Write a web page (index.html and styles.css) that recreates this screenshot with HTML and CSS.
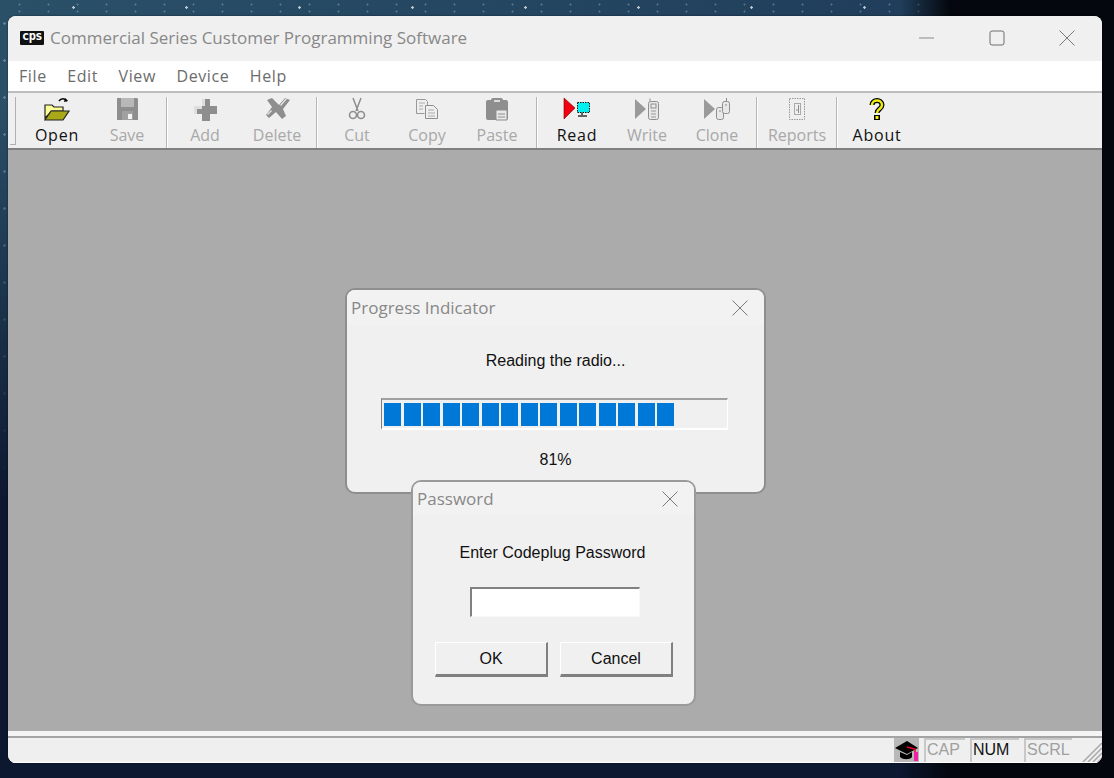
FILE: index.html
```html
<!DOCTYPE html>
<html lang="en">
<head>
  <meta charset="UTF-8">
  <title>Commercial Series Customer Programming Software</title>
  <link rel="stylesheet" href="styles.css">
</head>
<body>

<div class="window">

  <div class="titlebar">
    <span class="app-logo">cps</span>
    <span class="title-text">Commercial Series Customer Programming Software</span>
    <div class="window-controls">
      <svg class="control" width="16" height="16" viewBox="0 0 16 16"><path d="M0 8h15" stroke="#8a8a8a" fill="none"/></svg>
      <svg class="control" width="16" height="16" viewBox="0 0 16 16"><rect x="1" y="1" width="14" height="14" rx="2" stroke="#6e6e6e" fill="none"/></svg>
      <svg class="control" width="16" height="16" viewBox="0 0 16 16"><path d="M.5.5l15 15M15.500.5l-15 15" stroke="#7a7a7a" fill="none"/></svg>
    </div>
  </div>

  <div class="menubar">
    <span>File</span>
    <span>Edit</span>
    <span>View</span>
    <span>Device</span>
    <span>Help</span>
  </div>

  <div class="toolbar">
    <div class="grip"></div>

    <div class="tool">
      <svg width="28" height="24" viewBox="0 0 28 24">
        <path d="M16 4c2-3 6-3 8 0" stroke="#000" stroke-width="1.500" fill="none"/>
        <path d="M22 1l3 3-4 1z" fill="#000"/>
        <path d="M2 8h7l2 2h9v4H9L2 21z" fill="#ffff99" stroke="#222" stroke-width="1.200"/>
        <path d="M8 14h18l-6 9H2z" fill="#a8a818" stroke="#222" stroke-width="1.200"/>
      </svg>
      <span>Open</span>
    </div>
    <div class="tool off">
      <svg width="28" height="24" viewBox="0 0 28 24">
        <path d="M4 1h20l1 1v21H4z" fill="#8e8e8e"/>
        <rect x="8" y="1" width="13" height="9" fill="#b8b8b8"/>
        <rect x="9" y="14" width="11" height="9" fill="#a0a0a0"/>
        <rect x="15" y="17" width="4" height="5" fill="#f4f4f4"/>
      </svg>
      <span>Save</span>
    </div>
    <div class="sep"></div>

    <div class="tool off add">
      <svg width="28" height="24" viewBox="0 0 28 24">
        <path d="M11 2h8v7h7v8h-7v7h-8v-7H3V9h8z" fill="#8e8e8e"/>
        <path d="M11 2h3v7h-3zM3 9h8v3H6v5H3z" fill="#dedede"/>
      </svg>
      <span>Add</span>
    </div>
    <div class="tool off">
      <svg width="28" height="24" viewBox="0 0 28 24">
        <path d="M4 3l5-2 7 7 6-7 5 2-7 9 3 7-4 3-6-7-7 6-3-3 6-8z" fill="#8e8e8e"/>
        <path d="M17 8l6-7 1 1-6 7zM9 14l-4 4-1-1 4-4z" fill="#e4e4e4"/>
      </svg>
      <span>Delete</span>
    </div>
    <div class="sep"></div>

    <div class="tool off">
      <svg width="28" height="24" viewBox="0 0 28 24">
        <path d="M10 1l5 13M18 1l-5 13" stroke="#8e8e8e" stroke-width="1.500" fill="none"/>
        <circle cx="10" cy="18" r="3.500" stroke="#8e8e8e" stroke-width="1.600" fill="none"/>
        <circle cx="18" cy="18" r="3.500" stroke="#8e8e8e" stroke-width="1.600" fill="none"/>
      </svg>
      <span>Cut</span>
    </div>
    <div class="tool off">
      <svg width="28" height="24" viewBox="0 0 28 24">
        <path d="M3.500 2.500h9l2 2v5M3.500 2.500v14h8" stroke="#999" fill="none"/>
        <path d="M12.500 8.500h8l4 4v9h-12z" fill="#efefef" stroke="#8e8e8e"/>
        <path d="M6 6h6M6 9h4M6 12h4M15 13h6M15 16h7M15 19h7" stroke="#aaa" fill="none"/>
      </svg>
      <span>Copy</span>
    </div>
    <div class="tool off">
      <svg width="28" height="24" viewBox="0 0 28 24">
        <rect x="3" y="3" width="22" height="20" rx="2" fill="#8e8e8e"/>
        <rect x="8" y="1" width="12" height="5" rx="2" fill="#8e8e8e"/>
        <rect x="11" y="3" width="6" height="2" fill="#ddd"/>
        <path d="M13 13h11v10H13z" fill="#e8e8e8" stroke="#8e8e8e"/>
        <path d="M15 17h7M15 20h7" stroke="#8e8e8e"/>
      </svg>
      <span>Paste</span>
    </div>
    <div class="sep"></div>

    <div class="tool">
      <svg width="28" height="24" viewBox="0 0 28 24">
        <path d="M1 1l11 10L1 22z" fill="#f00010" stroke="#700" stroke-width=".6"/>
        <rect x="14.500" y="5.500" width="12" height="10" fill="#00f0f0" stroke="#111" stroke-dasharray="1.500 1"/>
        <path d="M19 16v2M15 19h9" stroke="#333" stroke-width="1.500" fill="none"/>
      </svg>
      <span>Read</span>
    </div>
    <div class="tool off">
      <svg width="28" height="24" viewBox="0 0 28 24">
        <path d="M2 2l11 10L2 22z" fill="#9a9a9a"/>
        <path d="M17 1.500v3" stroke="#8e8e8e" fill="none"/>
        <rect x="15.500" y="4.500" width="10" height="18" rx="2" fill="#e8e8e8" stroke="#8e8e8e"/>
        <rect x="18" y="7" width="5" height="4" fill="none" stroke="#8e8e8e"/>
        <path d="M18 14h5M18 17h5M18 20h5" stroke="#999" fill="none"/>
      </svg>
      <span>Write</span>
    </div>
    <div class="tool off">
      <svg width="28" height="24" viewBox="0 0 28 24">
        <path d="M1 2l11 10L1 22z" fill="#9a9a9a"/>
        <rect x="13.500" y="10.500" width="7" height="12" rx="2" fill="#e8e8e8" stroke="#8e8e8e"/>
        <rect x="19.500" y="4.500" width="7" height="12" rx="2" fill="#e8e8e8" stroke="#8e8e8e"/>
        <path d="M23.500 1v3M16 14h2M22 8h2" stroke="#8e8e8e" fill="none"/>
      </svg>
      <span>Clone</span>
    </div>
    <div class="sep"></div>

    <div class="tool off">
      <svg width="28" height="24" viewBox="0 0 28 24">
        <rect x="6.500" y="1.500" width="15" height="21" fill="#efefef" stroke="#999" stroke-dasharray="1.500 1"/>
        <rect x="11.500" y="6.500" width="6" height="11" fill="none" stroke="#aaa"/>
        <path d="M15.500 8v8M13 13h2" stroke="#8e8e8e" fill="none"/>
      </svg>
      <span>Reports</span>
    </div>
    <div class="sep"></div>

    <div class="tool">
      <svg width="28" height="24" viewBox="0 0 28 24">
        <path d="M9 8c0-6 10-6 10 0 0 4-5 4-5 8" stroke="#000" stroke-width="5" fill="none"/>
        <rect x="11" y="18" width="6" height="5" fill="#000"/>
        <path d="M9 8c0-6 10-6 10 0 0 4-5 4-5 8" stroke="#eeee10" stroke-width="2.500" fill="none"/>
        <rect x="12.500" y="19" width="3" height="3" fill="#eeee10"/>
      </svg>
      <span>About</span>
    </div>
  </div>

  <div class="workspace">

    <div class="dialog progress-dialog">
      <div class="dialog-title">
        <span>Progress Indicator</span>
        <svg width="16" height="16" viewBox="0 0 16 16"><path d="M.5.5l15 15M15.500.5l-15 15" stroke="#7a7a7a" fill="none"/></svg>
      </div>
      <div class="dialog-body">
        <p class="dialog-text">Reading the radio...</p>
        <div class="progress">
          <i></i><i></i><i></i><i></i><i></i><i></i><i></i><i></i><i></i><i></i><i></i><i></i><i></i><i></i><i></i>
        </div>
        <p class="percent">81%</p>
      </div>
    </div>

    <div class="dialog password-dialog">
      <div class="dialog-title">
        <span>Password</span>
        <svg width="16" height="16" viewBox="0 0 16 16"><path d="M.5.5l15 15M15.500.5l-15 15" stroke="#7a7a7a" fill="none"/></svg>
      </div>
      <div class="dialog-body">
        <p class="dialog-text">Enter Codeplug Password</p>
        <div class="password-input"></div>
        <div class="button-row">
          <div class="btn">OK</div>
          <div class="btn">Cancel</div>
        </div>
      </div>
    </div>

  </div>

  <div class="statusbar">
    <div class="status-icon">
      <svg width="25" height="24" viewBox="0 0 25 24">
        <path d="M1 10L13 3l11 7-11 6z" fill="#000"/>
        <path d="M6 14v5c3 3 10 3 12 0v-5l-5 3z" fill="#000"/>
        <path d="M13 9l8 2v3" stroke="#f00030" stroke-width="1.500" fill="none"/>
        <rect x="20" y="14" width="4" height="9" fill="#f020a0"/>
      </svg>
    </div>
    <div class="panel off">CAP</div>
    <div class="panel num">NUM</div>
    <div class="panel scrl off">SCRL</div>
    <svg class="size-grip" width="22" height="22" viewBox="0 0 22 22">
      <path d="M22 3L3 22M22 8L8 22M22 13L13 22M22 18L18 22" stroke="#a8a8a8" stroke-width="1.500" fill="none"/>
    </svg>
  </div>

</div>

</body>
</html>
```

FILE: styles.css
```css
* {
  box-sizing: border-box;
}

body {
  margin: 0;
  padding: 16px 12px 15px 8px;
  height: 778px;
  overflow: hidden;
  font-family: "Liberation Sans", Arial, sans-serif;
  background-color: #14263f;
  background-image:
    linear-gradient(90deg, rgba(3, 6, 12, 0) 0, rgba(3, 6, 12, 0) 900px, #04070d 950px),
    linear-gradient(180deg, rgba(10, 20, 40, 0) 0, rgba(10, 20, 40, 0) 100px, #0c1830 500px),
    radial-gradient(circle, rgba(255, 255, 255, .7) 1px, transparent 1.500px),
    radial-gradient(circle, rgba(200, 220, 240, .35) 1px, transparent 1.500px),
    radial-gradient(circle, rgba(200, 220, 240, .3) .8px, transparent 1.300px),
    linear-gradient(90deg, #2a5068, #1e3a58);
  background-size: auto, auto, 113px 11px, 71px 37px, 29px 7px, auto;
  background-position: 0 0, 0 0, 17px 2px, 40px 5px, 5px 1px, 0 0;
}

.window {
  width: 1094px;
  height: 747px;
  display: flex;
  flex-direction: column;
  background: #f0f0f0;
  border-radius: 8px;
  overflow: hidden;
  position: relative;
  box-shadow: 0 0 2px rgba(0, 0, 0, .6);
}

.titlebar {
  height: 45px;
  flex: none;
  display: flex;
  align-items: center;
  padding-left: 12px;
  padding-bottom: 2px;
  background: #f0f0f0;
}

.app-logo {
  width: 24px;
  height: 14px;
  margin-right: 6px;
  background: #111;
  color: #fff;
  font-family: "DejaVu Sans Mono", monospace;
  font-weight: bold;
  font-size: 12px;
  line-height: 11px;
  letter-spacing: -.5px;
  text-align: center;
  border-radius: 1px;
}

.title-text {
  font-family: "Open Sans", sans-serif;
  font-size: 17px;
  color: #888;
}

.window-controls {
  margin-left: auto;
  display: flex;
  gap: 54px;
  padding-right: 27px;
}

.menubar {
  height: 32px;
  flex: none;
  display: flex;
  align-items: center;
  gap: 20.500px;
  padding-left: 11px;
  background: #fff;
  font-family: "Open Sans", sans-serif;
  font-size: 16px;
  letter-spacing: .6px;
  color: #6b6b6b;
  border-bottom: 2px solid #bdbdbd;
}

.toolbar {
  height: 57px;
  flex: none;
  display: flex;
  align-items: stretch;
  padding: 4px 0 0 2px;
  background: #efefef;
  border-bottom: 2px solid #808080;
}

.grip {
  width: 6px;
  flex: none;
  margin: 0 6px 3px 0;
  border-right: 1px solid #b0b0b0;
  border-bottom: 1px solid #b0b0b0;
}

.tool {
  width: 70px;
  flex: none;
  display: flex;
  flex-direction: column;
  align-items: center;
  font-family: "Open Sans", sans-serif;
  font-size: 16px;
  line-height: 22px;
  letter-spacing: .8px;
  color: #111;
}

.tool svg {
  display: block;
  margin-bottom: 3px;
}

.tool.off {
  letter-spacing: 0;
  color: #a8a8a8;
}

.tool.add {
  padding-right: 4px;
}

.sep {
  width: 2px;
  flex: none;
  margin: 0 4px;
  background: #b4b4b4;
  border-right: 1px solid #fff;
}

.workspace {
  flex: 1;
  position: relative;
  background: #ababab;
  border-bottom: 5px solid #f4f4f4;
}

.dialog {
  position: absolute;
  background: #f0f0f0;
  border: 2px solid #8e8e8e;
  border-radius: 10px;
  color: #111;
  overflow: hidden;
}

.progress-dialog {
  left: 337px;
  top: 138px;
  width: 421px;
  height: 206px;
}

.password-dialog {
  left: 403px;
  top: 330px;
  width: 285px;
  height: 226px;
  border-color: #9a9a9a;
}

.dialog-title {
  height: 35px;
  display: flex;
  align-items: center;
  justify-content: space-between;
  padding: 0 16px 0 4px;
  font-family: "Open Sans", sans-serif;
  font-size: 17px;
  color: #888;
  background: #f2f2f2;
}

.password-dialog .dialog-title {
  height: 33px;
}

.dialog-body {
  display: flex;
  flex-direction: column;
  align-items: center;
}

.dialog-text {
  margin: 0;
  font-size: 16px;
  line-height: 20px;
}

.progress-dialog .dialog-text {
  margin-top: 26px;
}

.progress {
  width: 347px;
  height: 32px;
  margin-top: 27px;
  margin-left: -2px;
  padding: 3px 3px 2px 2px;
  display: flex;
  gap: 2.500px;
  background: #f0f0f0;
  border-top: 2px solid #a0a0a0;
  border-left: 1px solid #808080;
  border-right: 1px solid #fff;
  border-bottom: 2px solid #fff;
}

.progress i {
  width: 17px;
  background: #0078d7;
}

.percent {
  margin: 20px 0 0;
  font-size: 16px;
  line-height: 20px;
}

.password-dialog .dialog-text {
  margin-top: 28px;
  margin-left: -2px;
}

.password-input {
  width: 170px;
  height: 30px;
  margin-top: 24px;
  margin-left: 2px;
  background: #fff;
  border-top: 2px solid #808080;
  border-left: 2px solid #808080;
  border-right: 1px solid #f8f8f8;
  border-bottom: 1px solid #f8f8f8;
}

.button-row {
  display: flex;
  gap: 12px;
  margin-top: 25px;
  margin-left: 1px;
}

.btn {
  width: 113px;
  height: 35px;
  display: flex;
  align-items: center;
  justify-content: center;
  font-size: 16px;
  background: #f0f0f0;
  border-top: 1px solid #fff;
  border-left: 1px solid #fff;
  border-right: 2px solid #808080;
  border-bottom: 3px solid #808080;
}

.statusbar {
  height: 27px;
  flex: none;
  display: flex;
  align-items: stretch;
  gap: 5px;
  padding-left: 886px;
  background: #efefef;
  border-top: 2px solid #a4a4a4;
  border-bottom: 1px solid #fff;
  position: relative;
  font-size: 16px;
  color: #111;
}

.status-icon {
  width: 25px;
  flex: none;
  background: #b8b8b8;
}

.panel {
  width: 41px;
  flex: none;
  padding-left: 1px;
  line-height: 20px;
  border-top: 2px solid #c8c8c8;
  border-left: 2px solid #c8c8c8;
}

.panel.off {
  color: #a0a0a0;
}

.panel.num {
  width: 49px;
}

.panel.scrl {
  width: 48px;
}

.size-grip {
  position: absolute;
  right: 0;
  bottom: 0;
}
```
